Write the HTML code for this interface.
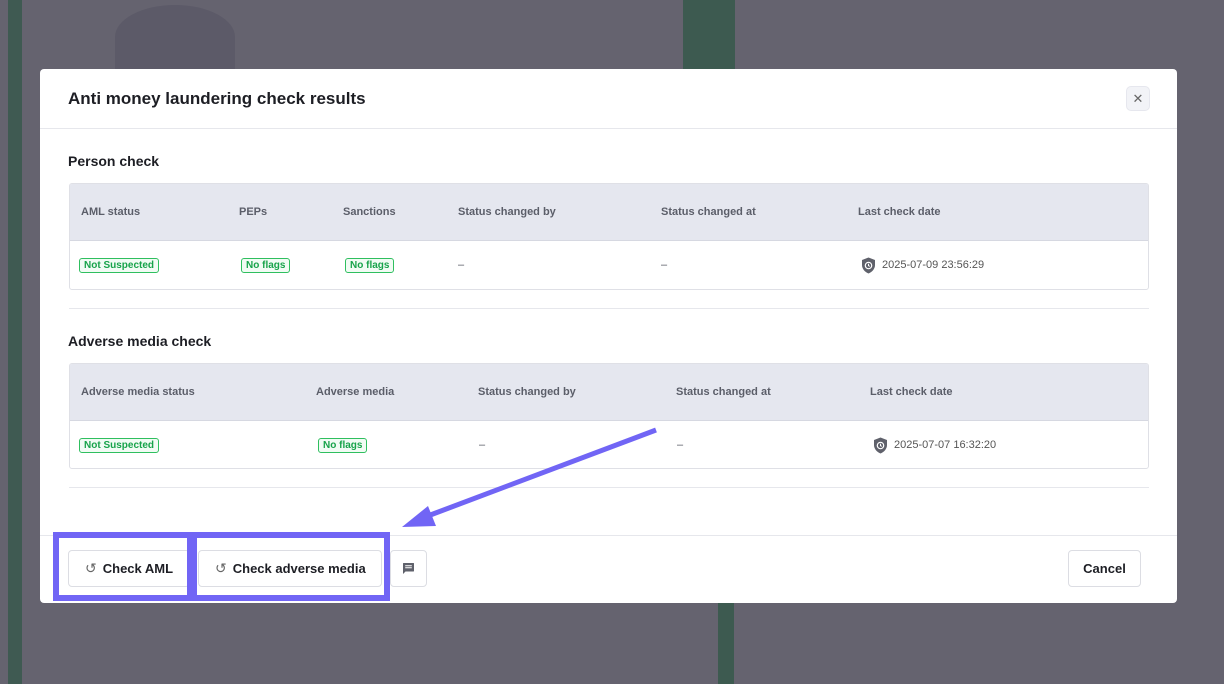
<!DOCTYPE html>
<html><head><meta charset="utf-8"><style>
*{box-sizing:border-box;margin:0;padding:0}
body{width:1224px;height:684px;overflow:hidden;background:#65636f;font-family:"Liberation Sans",sans-serif;position:relative}
.bg{position:absolute}
.modal{position:absolute;left:40px;top:69px;width:1137px;height:534px;background:#fff;border-radius:4px}
.title{position:absolute;left:28px;top:20px;font-size:17px;font-weight:bold;color:#1d1e24}
.hline{position:absolute;left:0;right:0;height:1px;background:#e6e7ec}
.close{position:absolute;left:1086px;top:17px;width:24px;height:25px;background:#f2f3f7;border:1px solid #e6e7ee;border-radius:5px;color:#666;font-size:13px;text-align:center;line-height:23px}
.h2{position:absolute;left:28px;font-size:14px;font-weight:bold;color:#1d1e24}
.tbl{position:absolute;left:29px;width:1080px;border:1px solid #dfe0e6;border-radius:3px;overflow:hidden}
.th{height:57px;background:#e5e7ef;border-bottom:1px solid #d6d8e1;position:relative}
.tr{height:48px;position:relative}
.c{position:absolute;font-size:11px;color:#555863;top:0;line-height:57px}
.tr .c{line-height:49px}
.th .c{font-weight:bold;color:#5b5e69}
.badge{display:inline-block;border:1px solid #2fbf5f;color:#17a34a;background:#f1fbf4;font-size:10px;line-height:13px;padding:0 4px;border-radius:3px;vertical-align:middle;font-weight:bold}
.btn{position:absolute;top:481px;height:37px;border:1px solid #dcdde3;border-radius:4px;background:#fff;font-size:13px;font-weight:bold;color:#1d1e24;line-height:35px}
.hl{position:absolute;border:6px solid #7165f5}
</style></head><body>
<div class="bg" style="left:8px;top:0;width:14px;height:684px;background:#3f5a52"></div>
<div class="bg" style="left:683px;top:0;width:52px;height:69px;background:#3d5a50"></div>
<div class="bg" style="left:718px;top:603px;width:16px;height:81px;background:#3d5a50"></div>
<div class="bg" style="left:115px;top:5px;width:120px;height:64px;background:#5c5a68;border-radius:50% 50% 0 0"></div>

<div class="modal">
<div class="title">Anti money laundering check results</div>
<div class="close">✕</div>
<div class="hline" style="top:59px"></div>
<div class="h2" style="top:84px">Person check</div>
<div class="tbl" style="top:114px;height:107px">
 <div class="th">
  <div class="c" style="left:11px">AML status</div>
  <div class="c" style="left:169px">PEPs</div>
  <div class="c" style="left:273px">Sanctions</div>
  <div class="c" style="left:388px">Status changed by</div>
  <div class="c" style="left:591px">Status changed at</div>
  <div class="c" style="left:788px">Last check date</div>
 </div>
 <div class="tr">
  <div class="c" style="left:9px"><span class="badge">Not Suspected</span></div>
  <div class="c" style="left:171px"><span class="badge">No flags</span></div>
  <div class="c" style="left:275px"><span class="badge">No flags</span></div>
  <div class="c" style="left:388px">–</div>
  <div class="c" style="left:591px">–</div>
  <div class="c" style="left:791px;color:#555"><svg width="15" height="17" viewBox="0 0 15 17" style="vertical-align:middle;margin-right:6px"><path d="M7.5 0.5L14 3v5c0 4-3 7-6.5 8.5C4 15 1 12 1 8V3z" fill="#5f616b"/><circle cx="7.5" cy="8.5" r="3.2" fill="none" stroke="#fff" stroke-width="1.2"/><path d="M7.5 6.8v1.8l1.2.8" stroke="#fff" stroke-width="1" fill="none"/></svg>2025-07-09 23:56:29</div>
 </div>
</div>
<div class="hline" style="top:239px;left:29px;right:28px"></div>
<div class="h2" style="top:264px">Adverse media check</div>
<div class="tbl" style="top:294px;height:106px">
 <div class="th">
  <div class="c" style="left:11px">Adverse media status</div>
  <div class="c" style="left:246px">Adverse media</div>
  <div class="c" style="left:408px">Status changed by</div>
  <div class="c" style="left:606px">Status changed at</div>
  <div class="c" style="left:800px">Last check date</div>
 </div>
 <div class="tr">
  <div class="c" style="left:9px"><span class="badge">Not Suspected</span></div>
  <div class="c" style="left:248px"><span class="badge">No flags</span></div>
  <div class="c" style="left:409px">–</div>
  <div class="c" style="left:607px">–</div>
  <div class="c" style="left:803px;color:#555"><svg width="15" height="17" viewBox="0 0 15 17" style="vertical-align:middle;margin-right:6px"><path d="M7.5 0.5L14 3v5c0 4-3 7-6.5 8.5C4 15 1 12 1 8V3z" fill="#5f616b"/><circle cx="7.5" cy="8.5" r="3.2" fill="none" stroke="#fff" stroke-width="1.2"/><path d="M7.5 6.8v1.8l1.2.8" stroke="#fff" stroke-width="1" fill="none"/></svg>2025-07-07 16:32:20</div>
 </div>
</div>
<div class="hline" style="top:418px;left:29px;right:28px"></div>
<div class="hline" style="top:466px"></div>

<div class="btn" style="left:28px;width:122px;padding-left:16px"><span style="color:#666;font-weight:normal;margin-right:6px;font-size:14px">↺</span>Check AML</div>
<div class="btn" style="left:158px;width:184px;padding-left:16px"><span style="color:#666;font-weight:normal;margin-right:6px;font-size:14px">↺</span>Check adverse media</div>
<div class="btn" style="left:350px;width:37px;text-align:center"><svg width="13" height="13" viewBox="0 0 13 13" style="vertical-align:middle;margin-top:-3px"><path d="M1 1.5q0-.5.5-.5h10q.5 0 .5.5v7.5q0 .5-.5.5H3.5L1 12z" fill="#5f616b"/><path d="M3.2 3.8h6.6M3.2 5.8h6.6" stroke="#fff" stroke-width="1"/></svg></div>
<div class="btn" style="left:1028px;width:73px;text-align:center">Cancel</div>
</div>

<div class="hl" style="left:53px;top:532px;width:140px;height:69px"></div>
<div class="hl" style="left:191px;top:532px;width:199px;height:69px"></div>
<svg width="1224" height="684" style="position:absolute;left:0;top:0">
<line x1="656" y1="430" x2="425" y2="517" stroke="#7165f5" stroke-width="5"/>
<polygon points="402,527 428,506 436,526" fill="#7165f5"/>
</svg>
</body></html>
